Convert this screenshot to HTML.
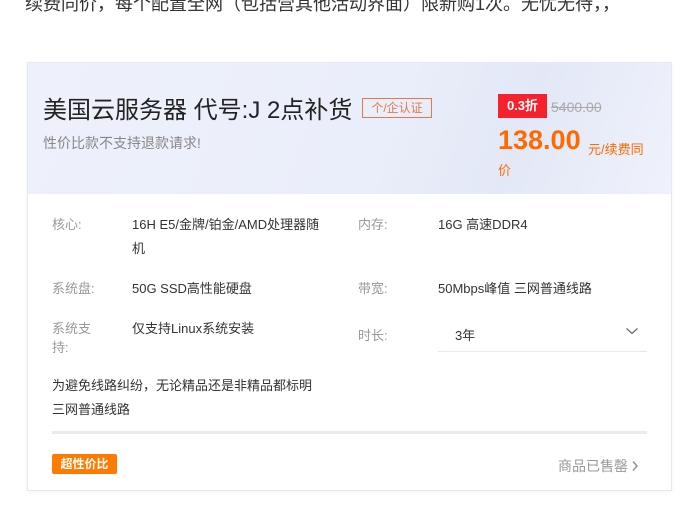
<!DOCTYPE html>
<html><head><meta charset="utf-8"><style>
*{margin:0;padding:0;box-sizing:border-box}
body{width:685px;height:522px;background:#fff;font-family:"Liberation Sans","Noto Sans CJK SC",sans-serif;position:relative;overflow:hidden;color:#333}
.a{position:absolute;white-space:nowrap}
.card{position:absolute;left:27px;top:62px;width:645px;height:429px;border:1px solid #e6e9f0;box-shadow:0 1px 4px rgba(0,0,0,.05);background:#fff}
.hd{position:absolute;left:0;top:0;width:643px;height:131px;background:linear-gradient(110deg,#eef1fb 0%,#eaeefa 55%,#e3e8f7 75%,#eff2fb 100%)}
.lb{color:#999;font-size:13px}
.v{color:#333;font-size:13px}
</style></head><body>
<div class="a" style="left:25px;top:-10px;font-size:18px;color:#333">续费同价，每个配置全网（包括营其他活动界面）限新购1次。无忧无待，，</div>
<div class="card">
<div class="hd"></div>
<div class="a" style="left:15px;top:27px;font-size:24px;color:#222">美国云服务器 代号:J 2点补货</div>
<div class="a" style="left:334px;top:35px;width:70px;height:20px;border:1px solid #e07a4a;color:#e07a4a;font-size:12px;text-align:center;line-height:18px">个/企认证</div>
<div class="a" style="left:15px;top:70px;font-size:14px;color:#888">性价比款不支持退款请求!</div>
<div class="a" style="left:470px;top:31px;width:49px;height:24px;background:#f5222d;color:#fff;font-size:13px;font-weight:bold;text-align:center;line-height:24px">0.3折</div>
<div class="a" style="left:523px;top:36px;font-size:14px;color:#aaa;text-decoration:line-through">5400.00</div>
<div class="a" style="left:470px;top:62px;font-size:27px;font-weight:bold;color:#ff6a00">138.00</div>
<div class="a" style="left:560px;top:76px;font-size:13px;color:#ff6a00">元/续费同</div>
<div class="a" style="left:470px;top:97px;font-size:13px;color:#ff6a00">价</div>

<div class="a lb" style="left:24px;top:151px">核心:</div>
<div class="a v" style="left:104px;top:151px">16H E5/金牌/铂金/AMD处理器随</div>
<div class="a v" style="left:104px;top:175px">机</div>
<div class="a lb" style="left:330px;top:151px">内存:</div>
<div class="a v" style="left:410px;top:151px">16G 高速DDR4</div>
<div class="a lb" style="left:24px;top:215px">系统盘:</div>
<div class="a v" style="left:104px;top:215px">50G SSD高性能硬盘</div>
<div class="a lb" style="left:330px;top:215px">带宽:</div>
<div class="a v" style="left:410px;top:215px">50Mbps峰值 三网普通线路</div>
<div class="a lb" style="left:24px;top:255px">系统支</div>
<div class="a lb" style="left:24px;top:274px">持:</div>
<div class="a v" style="left:104px;top:255px">仅支持Linux系统安装</div>
<div class="a lb" style="left:330px;top:262px">时长:</div>
<div class="a v" style="left:427px;top:262px">3年</div>
<svg class="a" style="left:597px;top:263px" width="14" height="10" viewBox="0 0 14 10"><path d="M1.5 2.5 L7 7.5 L12.5 2.5" fill="none" stroke="#666" stroke-width="1.2"/></svg>
<div class="a" style="left:410px;top:288px;width:209px;height:1px;background:#e6e8ee"></div>
<div class="a v" style="left:24px;top:312px">为避免线路纠纷，无论精品还是非精品都标明</div>
<div class="a v" style="left:24px;top:336px">三网普通线路</div>
<div class="a" style="left:24px;top:368px;width:595px;height:3px;background:#e9ebf0"></div>
<div class="a" style="left:24px;top:391px;width:65px;height:20px;background:#ff7a00;border-radius:2px;color:#fff;font-size:12px;font-weight:bold;text-align:center;line-height:20px">超性价比</div>
<div class="a" style="left:530px;top:393px;font-size:14px;color:#999">商品已售罄</div>
<svg class="a" style="left:603px;top:397px" width="8" height="12" viewBox="0 0 8 12"><path d="M2 1.5 L6 6 L2 10.5" fill="none" stroke="#999" stroke-width="1.6"/></svg>
</div>
</body></html>
